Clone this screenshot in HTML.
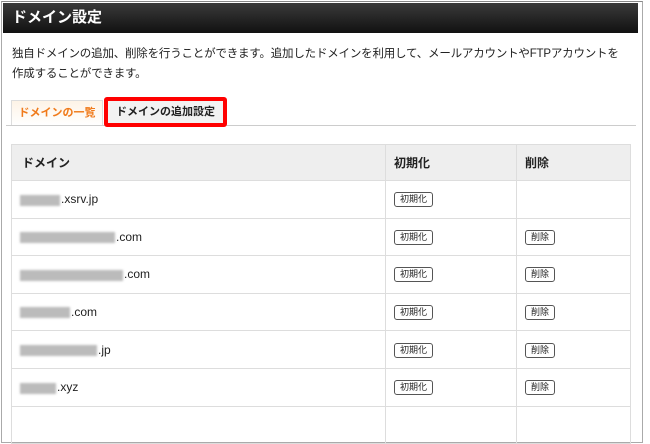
<!DOCTYPE html>
<html><head><meta charset="utf-8"><style>
body{margin:0;width:650px;height:411px;overflow:hidden;background:#fff;font-family:"Liberation Sans","Noto Sans CJK JP",sans-serif;position:relative}
.frame{position:absolute;left:1px;top:1px;width:640px;height:440px;border:1px solid #aaa;border-top:1px solid #888}
.hdr{position:absolute;left:3px;top:3px;width:635px;height:30px;background:linear-gradient(#3a3a3a,#111);color:#fff;font-weight:bold;font-size:15px;line-height:30px;padding-left:9px;box-sizing:border-box}
.desc{position:absolute;left:12px;top:44px;font-size:11.5px;line-height:20px;color:#222;white-space:nowrap;letter-spacing:-0.2px}
.tabline{position:absolute;left:6px;top:125px;width:630px;border-top:1px solid #ccc}
.tab1{position:absolute;left:11px;top:100px;width:92px;height:25px;background:linear-gradient(#fdf3e6,#fff);border:1px solid #ddd;border-bottom:none;box-sizing:border-box;color:#f07a1a;font-size:11px;font-weight:bold;line-height:25px;text-align:center}
.tab2{position:absolute;left:104px;top:97px;width:123px;height:30px;border:4px solid #f00;border-radius:3px;box-sizing:border-box;background:#f2f2f2;font-size:11px;font-weight:bold;line-height:22px;text-align:center;color:#222}
table{position:absolute;left:11px;top:144px;width:620px;border-collapse:collapse;font-size:12px}
td{border:1px solid #ddd;height:37.6px;padding:0 0 0 8px;color:#222;box-sizing:border-box}
tr.h td{background:#eee;font-weight:bold;height:36px}
.b{display:inline-block;border:1px solid #555;border-radius:3px;font-size:9px;padding:1px 5px;line-height:11px}
.bl{display:inline-block;height:11px;background:#bbb;vertical-align:middle;margin-right:1px;filter:blur(1px)}
</style></head><body>
<div class="frame"></div>
<div class="hdr">ドメイン設定</div>
<div class="desc">独自ドメインの追加、削除を行うことができます。追加したドメインを利用して、メールアカウントやFTPアカウントを<br>作成することができます。</div>
<div class="tabline"></div>
<div class="tab1">ドメインの一覧</div>
<div class="tab2">ドメインの追加設定</div>
<table>
<tr class="h"><td style="width:374px;padding-left:10px">ドメイン</td><td style="width:131px">初期化</td><td>削除</td></tr>
<tr><td><span class="bl" style="width:40px"></span>.xsrv.jp</td><td><span class="b">初期化</span></td><td></td></tr>
<tr><td><span class="bl" style="width:95px"></span>.com</td><td><span class="b">初期化</span></td><td><span class="b">削除</span></td></tr>
<tr><td><span class="bl" style="width:103px"></span>.com</td><td><span class="b">初期化</span></td><td><span class="b">削除</span></td></tr>
<tr><td><span class="bl" style="width:50px"></span>.com</td><td><span class="b">初期化</span></td><td><span class="b">削除</span></td></tr>
<tr><td><span class="bl" style="width:77px"></span>.jp</td><td><span class="b">初期化</span></td><td><span class="b">削除</span></td></tr>
<tr><td><span class="bl" style="width:36px"></span>.xyz</td><td><span class="b">初期化</span></td><td><span class="b">削除</span></td></tr>
<tr><td></td><td></td><td></td></tr>
</table>
</body></html>
